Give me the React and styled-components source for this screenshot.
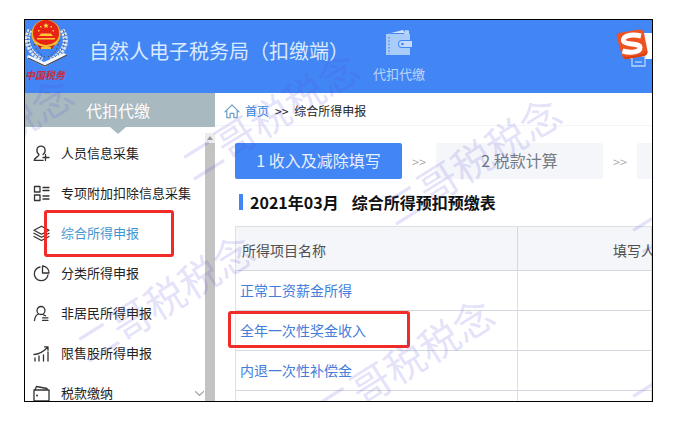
import React from 'react';
import styled, { createGlobalStyle, css } from 'styled-components';

const Global = createGlobalStyle`
  *, *::before, *::after { box-sizing: border-box; }
  body {
    margin: 0;
    background: #fff;
    color: #333;
    font-family: "Noto Sans CJK SC", "Liberation Sans", sans-serif;
  }
  button { font-family: inherit; padding: 0; border: 0; background: none; cursor: pointer; }
  a { text-decoration: none; }
`;

const Page = styled.div`
  display: flex;
  height: 100vh;
  padding: 19px 20px 20px 24px;
`;

const Window = styled.div`
  position: relative;
  flex: 1;
  min-width: 0;
  display: flex;
  flex-direction: column;
  overflow: hidden;
  border: 1px solid #000;
  background: #fff;
`;

const Header = styled.header`
  position: relative;
  display: flex;
  flex: none;
  height: 73px;
  background: #4285f4;
`;

const LogoSlot = styled.div`
  width: 64px;
  svg { display: block; }
`;

const AppTitle = styled.h1`
  margin: 0;
  width: 276px;
  padding-top: 16px;
  font-size: 20px;
  line-height: 30px;
  font-weight: 400;
  color: #d9eaff;
  white-space: nowrap;
`;

const Module = styled.button`
  display: flex;
  flex-direction: column;
  align-items: center;
  gap: 8px;
  width: 68px;
  padding-top: 9px;
  font-size: 13px;
  line-height: 18px;
  font-weight: 400;
  color: #bdd7fb;
`;

const Ime = styled.div`
  position: absolute;
  top: 7px;
  right: 0;
  svg { display: block; }
`;

const Body = styled.div`
  flex: 1;
  min-height: 0;
  display: flex;
`;

const Sidebar = styled.nav`
  flex: none;
  width: 190px;
  display: flex;
  flex-direction: column;
`;

const SideTitle = styled.div`
  position: relative;
  flex: none;
  height: 34px;
  padding-right: 4px;
  line-height: 34px;
  text-align: center;
  font-size: 16px;
  color: #fff;
  background: #a9b9c0;
  &::after {
    content: "";
    position: absolute;
    top: 100%;
    left: 50%;
    margin-left: -10px;
    border: 8px solid transparent;
    border-top: 7px solid #a9b9c0;
    border-bottom: 0;
  }
`;

const SideScroll = styled.div`
  flex: 1;
  min-height: 0;
  display: flex;
  margin-top: 6px;
`;

const Menu = styled.ul`
  flex: 1;
  min-width: 0;
  margin: 0;
  padding: 0;
  list-style: none;
`;

const Marked = css`
  &::after {
    content: "";
    position: absolute;
    border: 3px solid #f02b28;
    border-radius: 3px;
    pointer-events: none;
  }
`;

const MenuItem = styled.li`
  position: relative;
  ${(p) => p.$marked && css`
    ${Marked}
    &::after { top: -3px; left: 19px; width: 130px; height: 47px; }
  `}
`;

const MenuLink = styled.a`
  display: flex;
  align-items: center;
  gap: 11px;
  height: 40px;
  padding: 0 1px 0 8px;
  font-size: 13px;
  line-height: 20px;
  white-space: nowrap;
  color: ${(p) => (p.$active ? '#3f96cf' : '#222')};
  svg { flex: none; }
  svg:first-child { color: #333; }
  svg:nth-of-type(2) { margin-left: auto; color: #999; }
`;

const ScrollTrack = styled.div`
  flex: none;
  width: 10px;
  background: #c3c3c3;
`;

const ScrollUp = styled.button`
  display: flex;
  align-items: center;
  justify-content: center;
  width: 10px;
  height: 10px;
  background: #ececec;
`;

const Main = styled.main`
  flex: 1;
  min-width: 0;
  overflow: hidden;
`;

const Crumbs = styled.div`
  display: flex;
  align-items: center;
  height: 33px;
  padding: 3px 0 0 9px;
  font-size: 12px;
  line-height: 18px;
  color: #222;
  border-bottom: 1px solid #f4f5f6;
  white-space: nowrap;
  svg { margin-right: 5px; }
  a { color: #2f87dc; }
  span { margin: 0 6px; }
`;

const Steps = styled.div`
  display: flex;
  align-items: center;
  padding: 17px 0 0 20px;
`;

const Step = styled.button`
  flex: none;
  width: 167px;
  height: 36px;
  padding-bottom: 2px;
  border-radius: 2px;
  font-size: 16px;
  line-height: 24px;
  font-weight: 400;
  color: ${(p) => (p.$active ? '#e6f0ff' : '#737a86')};
  background: ${(p) => (p.$active ? '#4285f4' : '#f4f6f9')};
`;

const StepArrow = styled.span`
  flex: none;
  width: 34px;
  text-align: center;
  font-size: 13px;
  font-weight: 300;
  color: #999;
`;

const Heading = styled.h2`
  display: flex;
  align-items: center;
  margin: 11px 0 12px 24px;
  font-size: 16px;
  line-height: 24px;
  color: #111;
  white-space: nowrap;
  &::before {
    content: "";
    width: 4px;
    height: 16px;
    margin-right: 7px;
    background: #4285f4;
  }
`;

const Period = styled.span`
  margin-right: 13px;
`;

const TableArea = styled.div`
  padding-left: 20px;
`;

const Table = styled.table`
  width: 100%;
  table-layout: fixed;
  border-spacing: 0;
  border-left: 1px solid #dcdfe3;
  border-top: 1px solid #dcdfe3;
  font-size: 14px;
  line-height: 20px;
`;

const Th = styled.th`
  width: ${(p) => (p.$wide ? '282px' : 'auto')};
  height: 44px;
  padding: 2px 0 0 ${(p) => (p.$wide ? '6px' : '95px')};
  text-align: left;
  font-weight: 400;
  color: #505050;
  background: #f4f6f9;
  border-bottom: 1px solid #d5d8de;
  border-right: 1px solid #d5d8de;
  white-space: nowrap;
`;

const Td = styled.td`
  position: relative;
  height: 40px;
  padding: 0 0 2px 4px;
  border-bottom: 1px solid #d5d8de;
  border-right: 1px solid #dcdfe3;
  a { color: #447ddc; }
  ${(p) => p.$marked && css`
    ${Marked}
    &::after { top: 0; left: -8px; width: 182px; height: 37px; }
  `}
`;

const Watermarks = styled.div`
  position: absolute;
  inset: 0;
  overflow: hidden;
  pointer-events: none;
`;

const Mark = styled.span`
  position: absolute;
  left: ${(p) => p.$x}px;
  top: ${(p) => p.$y}px;
  transform: translate(-50%, -50%) rotate(-32deg);
  font-size: 40px;
  line-height: 40px;
  font-weight: 400;
  white-space: nowrap;
  color: rgba(88, 78, 220, 0.18);
`;

const marks = [
  [-42, 121], [244, 95], [446, 140], [139, 277], [379, 341], [693, 168], [693, 334],
];

const Stroke = ({ size = 17, children, ...rest }) => (
  <svg width={size} height={size} viewBox="0 0 17 17" fill="none" stroke="currentColor"
    strokeWidth="1.300" strokeLinecap="round" strokeLinejoin="round" aria-hidden="true" {...rest}>
    {children}
  </svg>
);

const icons = {
  person: (
    <Stroke>
      <path d="M6 9.500C2.500 7 3.500 1.200 8 1.200s5.500 5.800 2 8.300M6 9.500c0 2.500-4.500 2.800-4.800 5.800h9M12.500 9.500v6M10 12.500h6" />
    </Stroke>
  ),
  list: (
    <Stroke>
      <path d="M1.500 1.500h5.500v5.500H1.500zM1.500 10h5.500v5.500H1.500zM10 2.500h6M10 5.500h6M10 11h6M10 14h6" />
    </Stroke>
  ),
  layers: (
    <Stroke>
      <path d="M8.500 1.200 16 5.200 8.500 9.200 1 5.200zM1 8.300l7.500 4 7.500-4M1 11.500l7.500 4 7.500-4" />
    </Stroke>
  ),
  pie: (
    <Stroke>
      <path d="M7 2A6.900 6.900 0 1 0 15 10M9.500 1v7H16A6.800 6.800 0 0 0 9.500 1z" />
    </Stroke>
  ),
  resident: (
    <Stroke>
      <circle cx="8" cy="5.500" r="4" />
      <path d="M5.500 9C3 10 1.800 12 1.500 15.500M10 9.500l2.500 1.300M9.500 12.800H15M9.500 15.300H15" />
    </Stroke>
  ),
  chart: (
    <Stroke>
      <path d="M2 13v3M6 11v5M10.500 10v6M15 7v9M1 9.500c5 0 9-2.500 14-7.500M11.500 1.800H15v3.500" />
    </Stroke>
  ),
  wallet: (
    <Stroke>
      <path d="M1 5h15v11H1zM2 4.800 3.500 1.500l10.500 2V5" />
      <path d="M4 10.500h.1" strokeWidth="1.800" />
    </Stroke>
  ),
};

const menu = [
  ['person', '人员信息采集'],
  ['list', '专项附加扣除信息采集'],
  ['layers', '综合所得申报'],
  ['pie', '分类所得申报'],
  ['resident', '非居民所得申报'],
  ['chart', '限售股所得申报'],
  ['wallet', '税款缴纳'],
];

const rows = ['正常工资薪金所得', '全年一次性奖金收入', '内退一次性补偿金'];

const Emblem = () => (
  <svg width="46" height="64" viewBox="0 0 46 64" role="img" aria-label="中国税务">
    <g fill="none" stroke="#dfe5ec" strokeWidth="5" strokeDasharray="2.500 1">
      <path d="M5 10C-1 20 3 32 17 40" />
      <path d="M37 10c7 11 3 22-11 30" />
    </g>
    <g fill="none" stroke="#4a505c" strokeWidth="1" strokeDasharray="2 2">
      <path d="M5 10C0 20 4 32 17 39M9 20c0 8 4 13 11 17" />
      <path d="M38 10c5 10 1 22-12 29M34 20c0 8-4 13-11 17" />
    </g>
    <circle cx="21" cy="14" r="14.500" fill="#f0b323" />
    <circle cx="21" cy="13" r="13" fill="#e62314" />
    <path d="M21 3l.8 1.800h2l-1.600 1.300.6 2L21 7l-1.800 1.100.6-2-1.600-1.300h2z" fill="#ffe04a" />
    <path d="M15 6h1.500v1.500H15zM25.500 6H27v1.500h-1.500zM13 10h1.500v1.500H13zM27.500 10H29v1.500h-1.500z" fill="#ffd53e" />
    <path d="M14 16h14l-2-2.500H16zM12 18h18v1.500H12z" fill="#ffc83a" />
    <path d="M12 24h18l-3 5H15z" fill="#d81e12" />
    <path d="M10 22c7 5 15 5 22 0M16 28h10" stroke="#f6c334" strokeWidth="2" fill="none" />
    <path d="M3 35l16 7 20-9 3 2-22 12L2 38z" fill="#f5f8fc" />
    <path d="M3 38l17 8 22-11" stroke="#3d4657" strokeWidth="1.200" fill="none" />
    <text x="0" y="59" fontSize="10" fontWeight="700" fontStyle="italic" fill="#c92c42">中国税务</text>
  </svg>
);

const WalletLarge = () => (
  <svg width="28" height="28" viewBox="0 0 28 28" aria-hidden="true">
    <path d="M2 5 18 1l2 3H5z" fill="#d5e6fd" />
    <path d="M20 1l4 .5V5H19z" fill="#b7d4fb" />
    <path d="M1 5h24v6H17a4 4 0 0 0 0 8h8v7H1z" fill="#a9ccfa" />
    <path d="M17 12h10v6H17a3 3 0 0 1 0-6z" fill="#c5dcfd" />
    <circle cx="17.500" cy="15" r="1.300" fill="#4285f4" />
    <path d="M4 8v17" stroke="#4285f4" strokeWidth="1.200" strokeDasharray="1.500 1.800" />
  </svg>
);

const ImeLogo = () => (
  <svg width="36" height="42" viewBox="0 0 36 42" role="img" aria-label="S">
    <path d="M14 6h22v26H14z" fill="#fff" />
    <g fill="none" stroke="#b9d6fd" strokeWidth="1.300">
      <path d="M16 29h13v10H16z" fill="#4285f4" />
      <path d="M19 35h7" />
    </g>
    <path d="M3 6 23 2.500q4-.5 5 3.500l3.500 18q.5 4-3.500 5L11 32q-4 .5-5-3.500L.8 10Q0 7 3 6z" fill="#ee5223" />
    <path d="M7 29q3 2 21-2l3.500-3q0 4-4 5L11 32q-3 .3-4-3z" fill="#d83c10" />
    <path d="M25 9C14 6.500 6 9.500 7.500 14c1.500 4.500 16 1.500 16.500 6.500.4 4.500-9 6-17.500 3.500" fill="none" stroke="#fff" strokeWidth="5" />
  </svg>
);

export default function App() {
  return (
    <Page>
      <Global />
      <Window>
        <Header>
          <LogoSlot><Emblem /></LogoSlot>
          <AppTitle>自然人电子税务局（扣缴端）</AppTitle>
          <Module type="button"><WalletLarge />代扣代缴</Module>
          <Ime><ImeLogo /></Ime>
        </Header>
        <Body>
          <Sidebar>
            <SideTitle>代扣代缴</SideTitle>
            <SideScroll>
              <Menu>
                {menu.map(([icon, label]) => (
                  <MenuItem key={icon} $marked={icon === 'layers'}>
                    <MenuLink href="#" $active={icon === 'layers'}>
                      {icons[icon]}
                      {label}
                      {icon === 'wallet' && (
                        <Stroke size={9}><path d="M1 5l7.500 7L16 5" strokeWidth="2.200" /></Stroke>
                      )}
                    </MenuLink>
                  </MenuItem>
                ))}
              </Menu>
              <ScrollTrack>
                <ScrollUp type="button" aria-label="向上滚动">
                  <svg width="6" height="4" viewBox="0 0 6 4"><path d="M0 4l3-4 3 4z" fill="#999" /></svg>
                </ScrollUp>
              </ScrollTrack>
            </SideScroll>
          </Sidebar>
          <Main>
            <Crumbs>
              <Stroke size={16} color="#6d9fc9">
                <path d="M1 9.500 8.500 2 16 9.500M3 8v7.500h3.500V11h4v4.500H14V8" />
              </Stroke>
              <a href="#">首页</a>
              <span>&gt;&gt;</span>
              综合所得申报
            </Crumbs>
            <Steps>
              <Step type="button" $active>1 收入及减除填写</Step>
              <StepArrow>&gt;&gt;</StepArrow>
              <Step type="button">2 税款计算</Step>
              <StepArrow>&gt;&gt;</StepArrow>
              <Step type="button" aria-label="下一步" />
            </Steps>
            <Heading><Period>2021年03月</Period>综合所得预扣预缴表</Heading>
            <TableArea>
              <Table>
                <thead>
                  <tr><Th $wide>所得项目名称</Th><Th>填写人</Th></tr>
                </thead>
                <tbody>
                  {rows.map((name, i) => (
                    <tr key={name}>
                      <Td $marked={i === 1}><a href="#">{name}</a></Td>
                      <Td />
                    </tr>
                  ))}
                  <tr><Td /><Td /></tr>
                </tbody>
              </Table>
            </TableArea>
          </Main>
        </Body>
        <Watermarks aria-hidden="true">
          {marks.map(([x, y]) => <Mark key={`${x},${y}`} $x={x} $y={y}>二哥税税念</Mark>)}
        </Watermarks>
      </Window>
    </Page>
  );
}
